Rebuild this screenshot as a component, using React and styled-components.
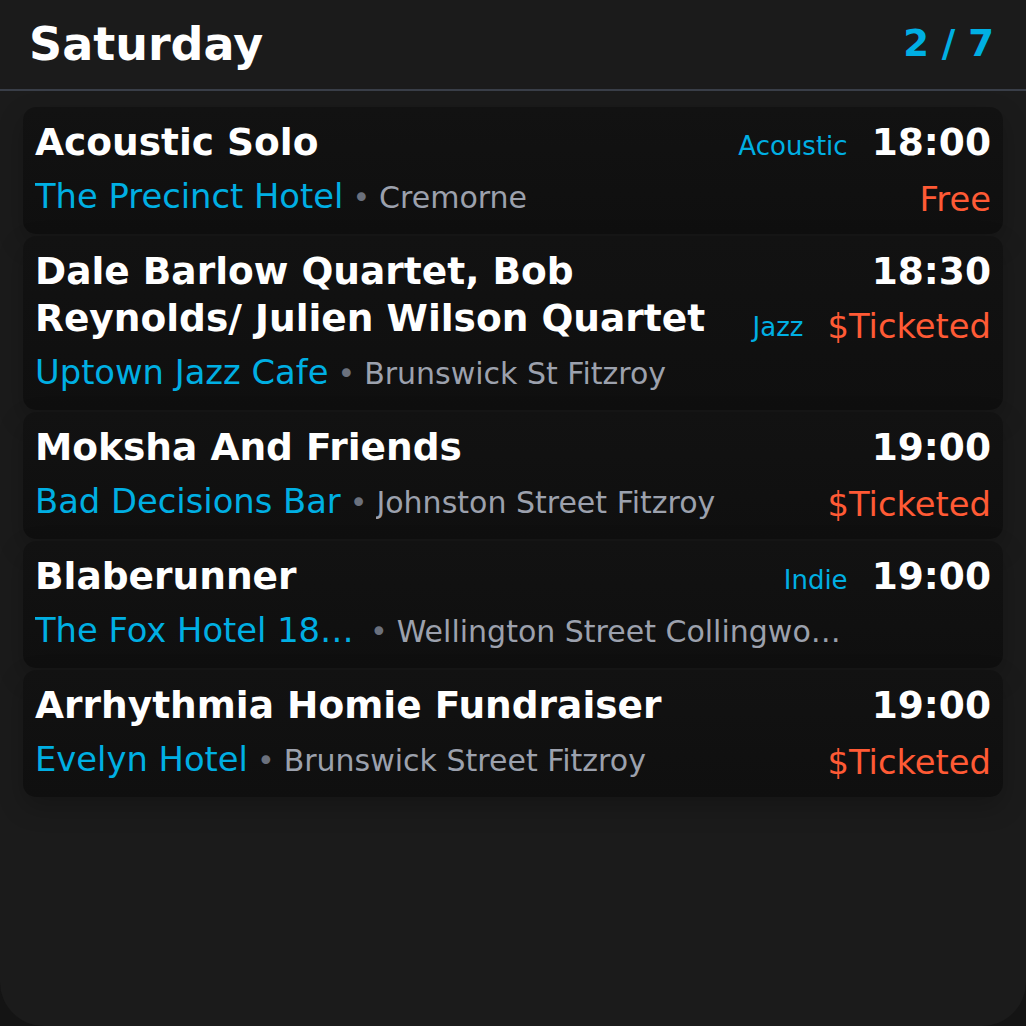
import styled, { createGlobalStyle } from "styled-components";

const GlobalStyle = createGlobalStyle`
  html, body {
    margin: 0;
    padding: 0;
    background: #141414;
  }
  * {
    box-sizing: border-box;
  }
`;

const gigs = [
  {
    title: "Acoustic Solo",
    venue: "The Precinct Hotel",
    location: "Cremorne",
    tag: "Acoustic",
    time: "18:00",
    price: "Free",
    areas: `"title top" "venue bottom"`,
  },
  {
    title: "Dale Barlow Quartet, Bob Reynolds/ Julien Wilson Quartet",
    venue: "Uptown Jazz Cafe",
    location: "Brunswick St Fitzroy",
    tag: "Jazz",
    tagWithPrice: true,
    time: "18:30",
    price: "$Ticketed",
    areas: `"title top" "title bottom" "venue venue"`,
  },
  {
    title: "Moksha And Friends",
    venue: "Bad Decisions Bar",
    location: "Johnston Street Fitzroy",
    time: "19:00",
    price: "$Ticketed",
    areas: `"title top" "venue bottom"`,
  },
  {
    title: "Blaberunner",
    venue: "The Fox Hotel 18+ Gig Room",
    location: "Wellington Street Collingwood",
    tag: "Indie",
    time: "19:00",
    areas: `"title top" "venue venue"`,
  },
  {
    title: "Arrhythmia Homie Fundraiser",
    venue: "Evelyn Hotel",
    location: "Brunswick Street Fitzroy",
    time: "19:00",
    price: "$Ticketed",
    areas: `"title top" "venue bottom"`,
  },
];

export default function App() {
  return (
    <>
      <GlobalStyle />
      <Screen>
        <Header>
          <DayTitle>Saturday</DayTitle>
          <Counter>2 / 7</Counter>
        </Header>

        <List>
          {gigs.map((gig) => (
            <Card key={gig.title} $areas={gig.areas}>
              <Title>{gig.title}</Title>

              <TopSide>
                {gig.tag && !gig.tagWithPrice && <Tag>{gig.tag}</Tag>}
                <Time>{gig.time}</Time>
              </TopSide>

              {gig.price && (
                <BottomSide $stacked={gig.tagWithPrice}>
                  {gig.tag && gig.tagWithPrice && <Tag>{gig.tag}</Tag>}
                  <Price>{gig.price}</Price>
                </BottomSide>
              )}

              <VenueLine>
                <Venue>{gig.venue}</Venue>
                <Dot>•</Dot>
                <Location>{gig.location}</Location>
              </VenueLine>
            </Card>
          ))}
        </List>
      </Screen>
    </>
  );
}

const Screen = styled.div`
  width: 1026px;
  height: 1026px;
  overflow: hidden;
  background: #1b1b1b;
  border-radius: 0 0 44px 44px;
  font-family: "DejaVu Sans", Verdana, sans-serif;
  color: #fff;
`;

const Header = styled.header`
  height: 91px;
  display: flex;
  align-items: center;
  justify-content: space-between;
  padding: 0 32px 2px 29px;
  border-bottom: 2px solid #393e48;
`;

const DayTitle = styled.h1`
  margin: 0;
  font-size: 46px;
  font-weight: 700;
  line-height: 1;
`;

const Counter = styled.span`
  font-size: 37px;
  font-weight: 700;
  color: #00afe3;
`;

const List = styled.div`
  display: flex;
  flex-direction: column;
  gap: 2px;
  padding: 16px 23px;
`;

const Card = styled.div`
  display: grid;
  grid-template-columns: minmax(0, 1fr) auto;
  grid-template-areas: ${(p) => p.$areas};
  column-gap: 24px;
  row-gap: 9px;
  padding: 12px 12px 15px;
  border-radius: 13px;
  background: linear-gradient(180deg, #121212 0%, #0f0f0f 100%);
  box-shadow: 0 10px 26px rgba(0, 0, 0, 0.22);
`;

const Title = styled.div`
  grid-area: title;
  font-size: 37.5px;
  font-weight: 700;
  line-height: 47px;
`;

const TopSide = styled.div`
  grid-area: top;
  display: flex;
  align-items: baseline;
  justify-content: flex-end;
  gap: 24px;
  height: 47px;
  line-height: 47px;
`;

const BottomSide = styled.div`
  grid-area: bottom;
  align-self: end;
  display: flex;
  align-items: center;
  justify-content: flex-end;
  gap: 24px;
  height: 39px;
  line-height: 39px;
  margin-bottom: ${(p) => (p.$stacked ? "-4px" : "0")};
`;

const Tag = styled.span`
  font-size: 26px;
  line-height: 1;
  color: #00afe3;
`;

const Time = styled.span`
  font-size: 37.5px;
  font-weight: 700;
`;

const Price = styled.span`
  font-size: 33.75px;
  color: #ff5a35;
`;

const VenueLine = styled.div`
  grid-area: venue;
  display: flex;
  align-items: baseline;
  min-width: 0;
  height: 44px;
  line-height: 44px;
  white-space: nowrap;
`;

const Venue = styled.span`
  max-width: 326px;
  overflow: hidden;
  text-overflow: ellipsis;
  font-size: 33.75px;
  color: #00afe3;
`;

const Dot = styled.span`
  padding: 0 9px;
  font-size: 30px;
  color: #6b717d;
`;

const Location = styled.span`
  max-width: 450px;
  overflow: hidden;
  text-overflow: ellipsis;
  font-size: 30px;
  color: #9ca1ad;
`;
